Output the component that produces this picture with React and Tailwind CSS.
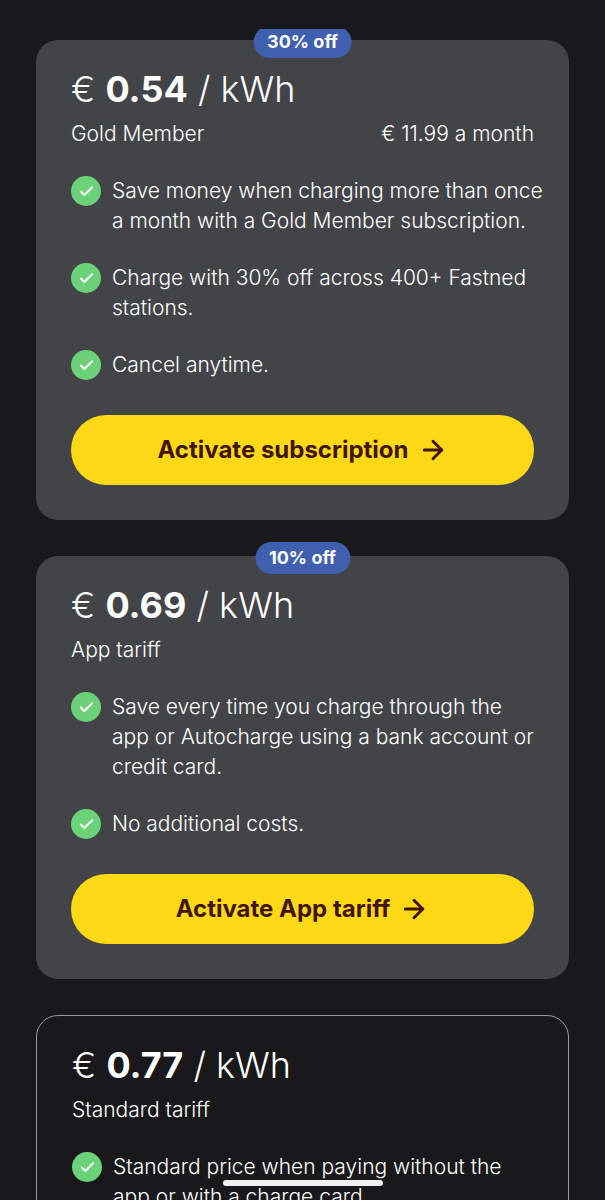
import { ArrowRight, Check } from 'lucide-react'

const tariffs = [
  {
    price: '0.54',
    name: 'Gold Member',
    fee: '€ 11.99 a month',
    badge: '30% off',
    action: 'Activate subscription',
    perks: [
      'Save money when charging more than once\na month with a Gold Member subscription.',
      'Charge with 30% off across 400+ Fastned\nstations.',
      'Cancel anytime.',
    ],
  },
  {
    price: '0.69',
    name: 'App tariff',
    badge: '10% off',
    action: 'Activate App tariff',
    perks: [
      'Save every time you charge through the\napp or Autocharge using a bank account or\ncredit card.',
      'No additional costs.',
    ],
  },
  {
    price: '0.77',
    name: 'Standard tariff',
    perks: ['Standard price when paying without the\napp or with a charge card.'],
    outlined: true,
  },
]

function TariffCard({ price, name, fee, badge, action, perks, outlined }) {
  return (
    <section className={`relative rounded-[22px] px-[35px] pt-[26px] pb-[35px] ${outlined ? 'border border-[#9a9a9c]' : 'bg-[#434447]'}`}>
      {badge && (
        <span className="absolute -top-[14px] left-1/2 -translate-x-1/2 rounded-full bg-[#405fae] px-[14px] text-[18px] leading-[32px] font-bold whitespace-nowrap">
          {badge}
        </span>
      )}
      <h2 className="text-[36px] leading-[46px] font-light">
        € <strong className="font-bold">{price}</strong> / kWh
      </h2>
      <div className="mt-[7px] flex justify-between text-[21px] leading-[30px]">
        <span>{name}</span>
        {fee && <span>{fee}</span>}
      </div>
      <ul className="-mr-5 mt-[27px] flex flex-col gap-[27px]">
        {perks.map((perk) => (
          <li key={perk} className="flex gap-[11px] text-[21px] leading-[30px]">
            <span className="flex size-[30px] shrink-0 items-center justify-center rounded-full bg-[#6bd279]">
              <Check size={17} strokeWidth={2.8} />
            </span>
            <span className="min-w-0 whitespace-pre-line">{perk}</span>
          </li>
        ))}
      </ul>
      {action && (
        <button className="mt-[35px] flex h-[70px] w-full items-center justify-center gap-[9px] rounded-full bg-[#ffd915] text-[24px] font-bold text-[#401407]">
          {action}
          <ArrowRight size={30} strokeWidth={2.4} />
        </button>
      )}
    </section>
  )
}

export default function App() {
  return (
    <div className="flex h-screen flex-col bg-[#19191b] font-['Inter',sans-serif] font-light text-white">
      <header className="h-[29px] shrink-0" />
      <main className="flex min-h-0 flex-1 flex-col gap-9 overflow-y-auto px-9 pt-[11px] pb-9 [scrollbar-width:none]">
        {tariffs.map((tariff) => (
          <TariffCard key={tariff.name} {...tariff} />
        ))}
      </main>
      <div className="fixed bottom-[14px] left-1/2 h-[6px] w-[160px] -translate-x-1/2 rounded-full bg-[#f0f0f0]" />
    </div>
  )
}
